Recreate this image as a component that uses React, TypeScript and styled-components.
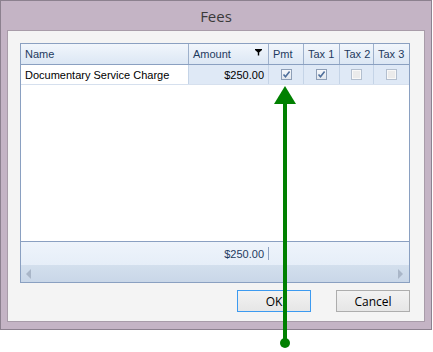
import React from "react";
import styled, { createGlobalStyle } from "styled-components";

const Global = createGlobalStyle`
  html, body { margin: 0; padding: 0; background: #ffffff; }
  body { width: 433px; height: 352px; overflow: hidden; }
`;

const Page = styled.div`
  position: relative;
  width: 433px;
  height: 352px;
  background: #ffffff;
`;

const Window = styled.div`
  width: 432px;
  height: 330px;
  box-sizing: border-box;
  border: 1px solid #8c818f;
  background: #c4b4c5;
  display: flex;
  flex-direction: column;
  padding: 0 6px 7px 6px;
`;

const TitleBar = styled.div`
  height: 29px;
  display: flex;
  align-items: center;
  justify-content: center;
  font-family: "Open Sans", "Noto Sans", sans-serif;
  font-size: 15px;
  color: #3a3a3a;
  padding-top: 1px;
  box-sizing: border-box;
`;

const Panel = styled.div`
  flex: 1;
  box-sizing: border-box;
  border: 1px solid #a89ca9;
  background: #f4f4f4;
  padding: 12px 14px 0 12px;
  display: flex;
  flex-direction: column;
`;

const Grid = styled.div`
  width: 390px;
  height: 240px;
  box-sizing: border-box;
  border: 1px solid #8aa0c1;
  background: #ffffff;
  display: flex;
  flex-direction: column;
  font-family: "Liberation Sans", Arial, sans-serif;
  font-size: 11px;
`;

const cols = "168px 80px 35px 36px 34px 35px";

const HeaderRow = styled.div`
  display: grid;
  grid-template-columns: ${cols};
  height: 21px;
  box-sizing: border-box;
  border-bottom: 1px solid #8aa0c1;
  background: linear-gradient(#f1f6fc, #dce7f4);
`;

const HeaderCell = styled.div<{ $last?: boolean }>`
  position: relative;
  display: flex;
  align-items: center;
  padding-left: 4px;
  box-sizing: border-box;
  border-right: ${(p) => (p.$last ? "none" : "1px solid #9db0cb")};
  color: #1e3a60;
`;

const FilterIcon = styled.svg`
  position: absolute;
  right: 6px;
  top: 5px;
`;

const DataRow = styled.div`
  display: grid;
  grid-template-columns: ${cols};
  height: 20px;
  box-sizing: border-box;
  border-bottom: 1px solid #d6e0ee;
`;

const DataCell = styled.div<{ $white?: boolean; $align?: string; $last?: boolean }>`
  display: flex;
  align-items: center;
  justify-content: ${(p) => p.$align || "flex-start"};
  padding: 0 4px;
  box-sizing: border-box;
  background: ${(p) => (p.$white ? "#ffffff" : "#dfe9f6")};
  border-right: ${(p) => (p.$last ? "none" : "1px solid #c5d4e7")};
  color: #000000;
`;

const Body = styled.div`
  flex: 1;
  background: #ffffff;
`;

const Footer = styled.div`
  display: grid;
  grid-template-columns: 248px 1fr;
  height: 24px;
  box-sizing: border-box;
  border-top: 1px solid #8aa0c1;
  background: linear-gradient(#eef4fb, #e6eef8);
`;

const FooterSum = styled.div`
  display: flex;
  align-items: center;
  justify-content: flex-end;
  padding-right: 5px;
  color: #1e3a60;
  position: relative;
  &::after {
    content: "";
    position: absolute;
    right: 0;
    top: 5px;
    bottom: 5px;
    width: 1px;
    background: #8aa0c1;
  }
`;

const ScrollBar = styled.div`
  height: 17px;
  display: flex;
  align-items: center;
  justify-content: space-between;
  padding: 0 6px 0 5px;
  background: linear-gradient(#d3dfed, #c9d7e8);
`;

const ArrowTri = styled.div<{ $dir: "left" | "right" }>`
  width: 0;
  height: 0;
  border-top: 5px solid transparent;
  border-bottom: 5px solid transparent;
  ${(p) =>
    p.$dir === "left"
      ? "border-right: 5px solid #a9b6c8;"
      : "border-left: 5px solid #a9b6c8;"}
`;

const ButtonRow = styled.div`
  display: flex;
  justify-content: flex-end;
  gap: 25px;
  margin-top: 7px;
  padding-right: 0;
  width: 390px;
`;

const Button = styled.button<{ $focused?: boolean }>`
  width: 74px;
  height: 22px;
  box-sizing: border-box;
  border: 1px solid ${(p) => (p.$focused ? "#3c9af0" : "#adadad")};
  background: linear-gradient(#f2f2f2, #e6e6e6);
  font-family: "Open Sans", "Noto Sans", sans-serif;
  font-size: 12px;
  color: #000;
  padding: 0;
`;

const CheckWrap = styled.div<{ $checked?: boolean }>`
  width: 11px;
  height: 11px;
  box-sizing: border-box;
  border: 1px solid ${(p) => (p.$checked ? "#8e9fb7" : "#b3bfcf")};
  background: ${(p) => (p.$checked ? "linear-gradient(#f6f8fb,#e2e7ee)" : "#ebebeb")};
  display: flex;
  align-items: center;
  justify-content: center;
  box-shadow: ${(p) => (p.$checked ? "none" : "inset 0 0 0 1px #f8f8f8")};
`;

const Overlay = styled.svg`
  position: absolute;
  left: 0;
  top: 0;
  pointer-events: none;
`;

function Check({ checked }: { checked?: boolean }) {
  return (
    <CheckWrap $checked={checked}>
      {checked && (
        <svg width="9" height="9" viewBox="0 0 9 9">
          <path d="M1.5 4.5 L3.5 6.8 L7.6 1.6" stroke="#50709c" strokeWidth="1.6" fill="none" />
        </svg>
      )}
    </CheckWrap>
  );
}

export default function App() {
  return (
    <>
      <Global />
      <Page>
        <Window>
          <TitleBar>Fees</TitleBar>
          <Panel>
            <Grid>
              <HeaderRow>
                <HeaderCell>Name</HeaderCell>
                <HeaderCell>
                  Amount
                  <FilterIcon width="7" height="7" viewBox="0 0 7 7">
                    <path d="M0 0 H7 V1 L4.2 3.5 V6.5 H2.8 V3.5 L0 1 Z" fill="#000" />
                  </FilterIcon>
                </HeaderCell>
                <HeaderCell>Pmt</HeaderCell>
                <HeaderCell>Tax 1</HeaderCell>
                <HeaderCell>Tax 2</HeaderCell>
                <HeaderCell $last>Tax 3</HeaderCell>
              </HeaderRow>
              <DataRow>
                <DataCell $white>Documentary Service Charge</DataCell>
                <DataCell $align="flex-end">$250.00</DataCell>
                <DataCell $align="center"><Check checked /></DataCell>
                <DataCell $align="center"><Check checked /></DataCell>
                <DataCell $align="center"><Check /></DataCell>
                <DataCell $align="center" $last><Check /></DataCell>
              </DataRow>
              <Body />
              <Footer>
                <FooterSum>$250.00</FooterSum>
                <div />
              </Footer>
              <ScrollBar>
                <ArrowTri $dir="left" />
                <ArrowTri $dir="right" />
              </ScrollBar>
            </Grid>
            <ButtonRow>
              <Button $focused>OK</Button>
              <Button>Cancel</Button>
            </ButtonRow>
          </Panel>
        </Window>
        <Overlay width="433" height="352" viewBox="0 0 433 352">
          <line x1="285" y1="100" x2="285" y2="343" stroke="#008000" strokeWidth="4" />
          <polygon points="285,86 274,104 296,104" fill="#008000" />
          <circle cx="285" cy="343" r="5" fill="#008000" />
        </Overlay>
      </Page>
    </>
  );
}
